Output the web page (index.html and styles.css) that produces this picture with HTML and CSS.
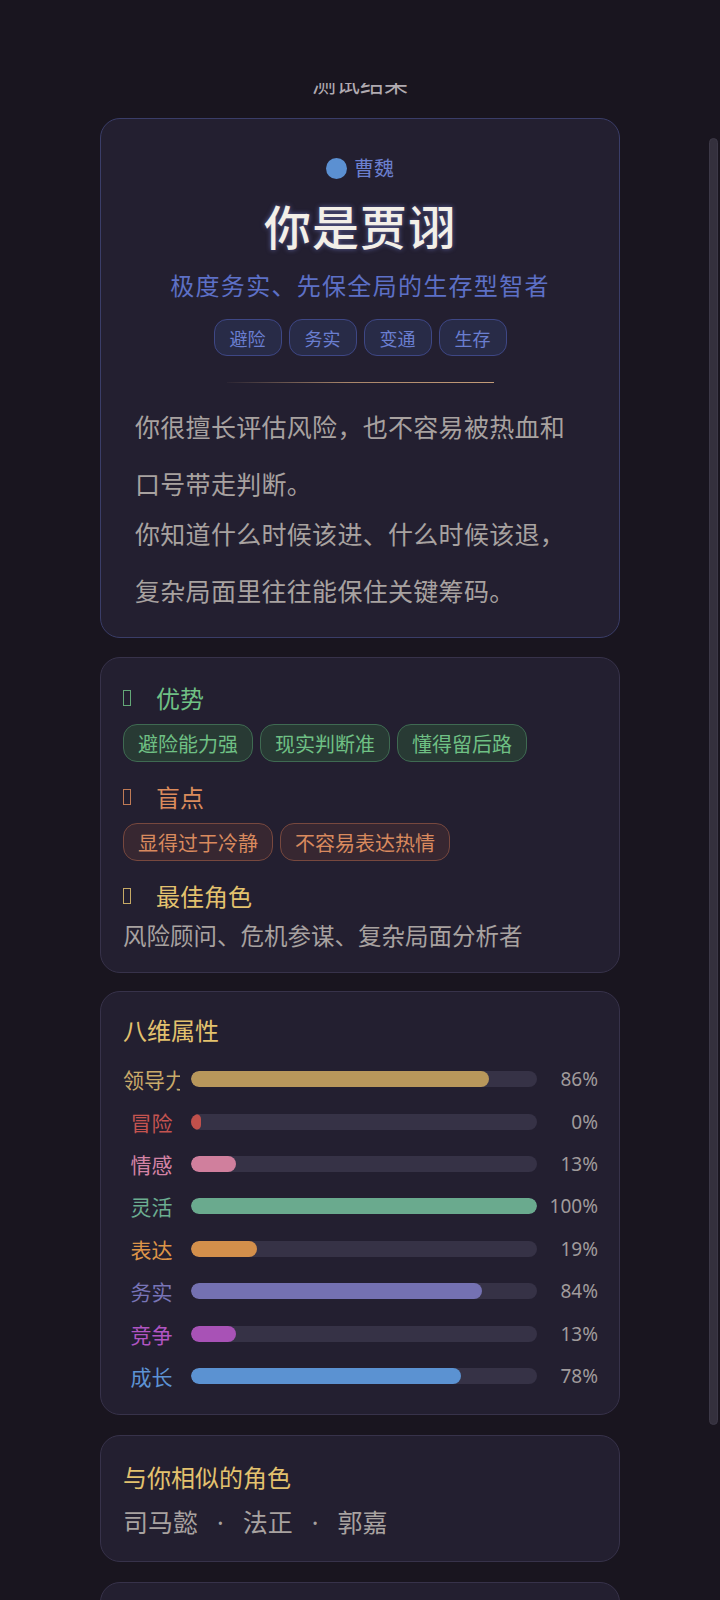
FILE: index.html
```html
<!DOCTYPE html>
<html lang="zh-CN">
<head>
<meta charset="utf-8">
<title>测试结果</title>
<link rel="stylesheet" href="styles.css">
</head>
<body>
<div class="appbar"></div>
<div class="scrollthumb"></div>
<main class="page">
  <h1 class="page-title">测试结果</h1>

  <section class="card hero">
    <div class="faction"><span class="dot"></span>曹魏</div>
    <div class="name">你是贾诩</div>
    <div class="tagline">极度务实、先保全局的生存型智者</div>
    <div class="hero-tags">
      <span class="htag">避险</span>
      <span class="htag">务实</span>
      <span class="htag">变通</span>
      <span class="htag">生存</span>
    </div>
    <div class="divider"></div>
    <p class="desc">你很擅长评估风险，也不容易被热血和<br>口号带走判断。</p>
    <p class="desc desc2">你知道什么时候该进、什么时候该退，<br>复杂局面里往往能保住关键筹码。</p>
  </section>

  <section class="card traits">
    <div class="sec-head green"><span class="tofu"></span>优势</div>
    <div class="chips">
      <span class="chip chip-green">避险能力强</span>
      <span class="chip chip-green">现实判断准</span>
      <span class="chip chip-green">懂得留后路</span>
    </div>
    <div class="sec-head orange gap"><span class="tofu"></span>盲点</div>
    <div class="chips">
      <span class="chip chip-orange">显得过于冷静</span>
      <span class="chip chip-orange">不容易表达热情</span>
    </div>
    <div class="sec-head gold gap"><span class="tofu"></span>最佳角色</div>
    <div class="role">风险顾问、危机参谋、复杂局面分析者</div>
  </section>

  <section class="card stats">
    <div class="card-title">八维属性</div>
    <div class="bars">
      <div class="row"><span class="lbl c-lead">领导力</span><div class="track"><div class="fill f-lead" style="width:86%"></div></div><span class="pct">86%</span></div>
      <div class="row"><span class="lbl c-risk">冒险</span><div class="track"><div class="fill f-risk" style="width:0%"></div></div><span class="pct">0%</span></div>
      <div class="row"><span class="lbl c-emo">情感</span><div class="track"><div class="fill f-emo" style="width:13%"></div></div><span class="pct">13%</span></div>
      <div class="row"><span class="lbl c-flex">灵活</span><div class="track"><div class="fill f-flex" style="width:100%"></div></div><span class="pct">100%</span></div>
      <div class="row"><span class="lbl c-expr">表达</span><div class="track"><div class="fill f-expr" style="width:19%"></div></div><span class="pct">19%</span></div>
      <div class="row"><span class="lbl c-prag">务实</span><div class="track"><div class="fill f-prag" style="width:84%"></div></div><span class="pct">84%</span></div>
      <div class="row"><span class="lbl c-comp">竞争</span><div class="track"><div class="fill f-comp" style="width:13%"></div></div><span class="pct">13%</span></div>
      <div class="row"><span class="lbl c-grow">成长</span><div class="track"><div class="fill f-grow" style="width:78%"></div></div><span class="pct">78%</span></div>
    </div>
  </section>

  <section class="card similar">
    <div class="card-title">与你相似的角色</div>
    <div class="names">司马懿<span class="sep">·</span>法正<span class="sep">·</span>郭嘉</div>
  </section>

  <section class="card more"></section>
</main>
</body>
</html>
```
FILE: styles.css
```css
* { box-sizing: border-box; }

html, body {
  margin: 0;
  padding: 0;
  background: #19151f;
}

body {
  font-family: "Noto Sans CJK SC", "Noto Sans", sans-serif;
  color: #a8a2a0;
  overflow: hidden;
  height: 1600px;
}

.appbar {
  position: fixed;
  top: 0;
  left: 0;
  right: 0;
  height: 83px;
  background: #19151f;
  z-index: 5;
}

.scrollthumb {
  position: fixed;
  left: 709px;
  top: 138px;
  width: 9px;
  height: 1287px;
  border-radius: 5px;
  background: #34303d;
  border: 1px solid #3c3847;
  z-index: 6;
}

.page {
  width: 520px;
  margin: 0 auto;
  padding-top: 66px;
  display: flex;
  flex-direction: column;
  gap: 20px;
}

.page-title {
  margin: 0;
  font-size: 24px;
  line-height: 32px;
  font-weight: 400;
  text-align: center;
  color: #b0aab0;
}

.card {
  background: #231f30;
  border: 1px solid #37324a;
  border-radius: 20px;
}

/* hero card */
.hero {
  border-color: #3a3d68;
  padding: 35px 0 18px;
  display: flex;
  flex-direction: column;
  align-items: center;
}

.faction {
  display: flex;
  align-items: center;
  gap: 7px;
  font-size: 20px;
  line-height: 28px;
  color: #6b7fcf;
}

.dot {
  width: 21px;
  height: 21px;
  border-radius: 50%;
  background: #5b90d2;
}

.name {
  margin-top: 15px;
  font-size: 47px;
  line-height: 56px;
  font-weight: 500;
  color: #f3efe8;
  letter-spacing: 1px;
  text-shadow: 0 0 5px rgba(130, 140, 230, 0.6);
}

.tagline {
  margin-top: 16px;
  font-size: 24px;
  line-height: 32px;
  letter-spacing: 1.3px;
  color: #5d70c6;
}

.hero-tags {
  margin-top: 18px;
  display: flex;
  gap: 7px;
}

.htag {
  height: 37px;
  padding: 0 15px;
  display: flex;
  align-items: center;
  border-radius: 13px;
  border: 1px solid #3e4785;
  background: #282b47;
  color: #6a7ed0;
  font-size: 18px;
}

.divider {
  margin-top: 26px;
  width: 267px;
  height: 1px;
  background: linear-gradient(90deg, rgba(180, 140, 110, 0.05), #a8856a 45%, #c49c78);
}

.desc {
  align-self: stretch;
  margin: 15px 0 0;
  padding: 0 20px 0 34px;
  font-size: 25px;
  line-height: 57px;
  letter-spacing: 0.3px;
  color: #a8a2a0;
  white-space: nowrap;
}

.desc2 {
  margin-top: -7px;
}

/* traits card */
.traits {
  margin-top: -1px;
  padding: 24px 22px 21px;
}

.sec-head {
  display: flex;
  align-items: center;
  font-size: 24px;
  line-height: 32px;
}

.sec-head.gap { margin-top: 19px; }

.tofu {
  width: 8px;
  height: 16px;
  border: 1px solid currentColor;
  margin-right: 25px;
  opacity: 0.85;
}

.green { color: #6fc084; }
.orange { color: #db8b5c; }
.gold { color: #e3c26e; }

.chips {
  margin-top: 10px;
  display: flex;
  gap: 7px;
}

.chip {
  height: 38px;
  padding: 0 14px;
  display: flex;
  align-items: center;
  border-radius: 14px;
  font-size: 20px;
}

.chip-green {
  background: #283a34;
  border: 1px solid #3f6a52;
  color: #6fc084;
}

.chip-orange {
  background: #372731;
  border: 1px solid #77483e;
  color: #d98a5e;
}

.role {
  margin-top: 7px;
  font-size: 23.5px;
  line-height: 32px;
  color: #a8a2a0;
}

/* stats card */
.stats {
  margin-top: -2px;
  padding: 22px 21px 17px 22px;
}

.card-title {
  font-size: 24px;
  line-height: 32px;
  color: #e3c26e;
}

.bars {
  margin-top: 12px;
  display: grid;
  grid-auto-rows: 42.4px;
}

.row {
  display: grid;
  grid-template-columns: 57px 1fr 50px;
  column-gap: 11px;
  align-items: center;
}

.lbl {
  font-size: 21px;
  line-height: 30px;
  text-align: center;
  white-space: nowrap;
  overflow: hidden;
}

.track {
  height: 16px;
  border-radius: 8px;
  background: #363246;
  overflow: hidden;
}

.fill {
  height: 100%;
  min-width: 10px;
  border-radius: 8px;
}

.pct {
  font-family: "Noto Sans", "Roboto", sans-serif;
  font-size: 19px;
  text-align: right;
  color: #a09b9c;
}

.c-lead { color: #c9aa6a; }
.c-risk { color: #c45450; }
.c-emo { color: #d483a5; }
.c-flex { color: #6cad91; }
.c-expr { color: #dc9448; }
.c-prag { color: #7874b6; }
.c-comp { color: #b055c2; }
.c-grow { color: #5d93d4; }

.f-lead { background: #b8975b; }
.f-risk { background: #c0504b; }
.f-emo { background: #d07f9d; }
.f-flex { background: #6aaa8e; }
.f-expr { background: #d38f4b; }
.f-prag { background: #7471b2; }
.f-comp { background: #a852b6; }
.f-grow { background: #5b92d2; }

/* similar card */
.similar {
  padding: 25px 22px 23px;
}

.names {
  margin-top: 12px;
  font-size: 25px;
  line-height: 32px;
  color: #a8a2a0;
}

.sep {
  font-family: "Noto Sans", sans-serif;
  margin: 0 19px;
}

.more {
  height: 120px;
}
```
